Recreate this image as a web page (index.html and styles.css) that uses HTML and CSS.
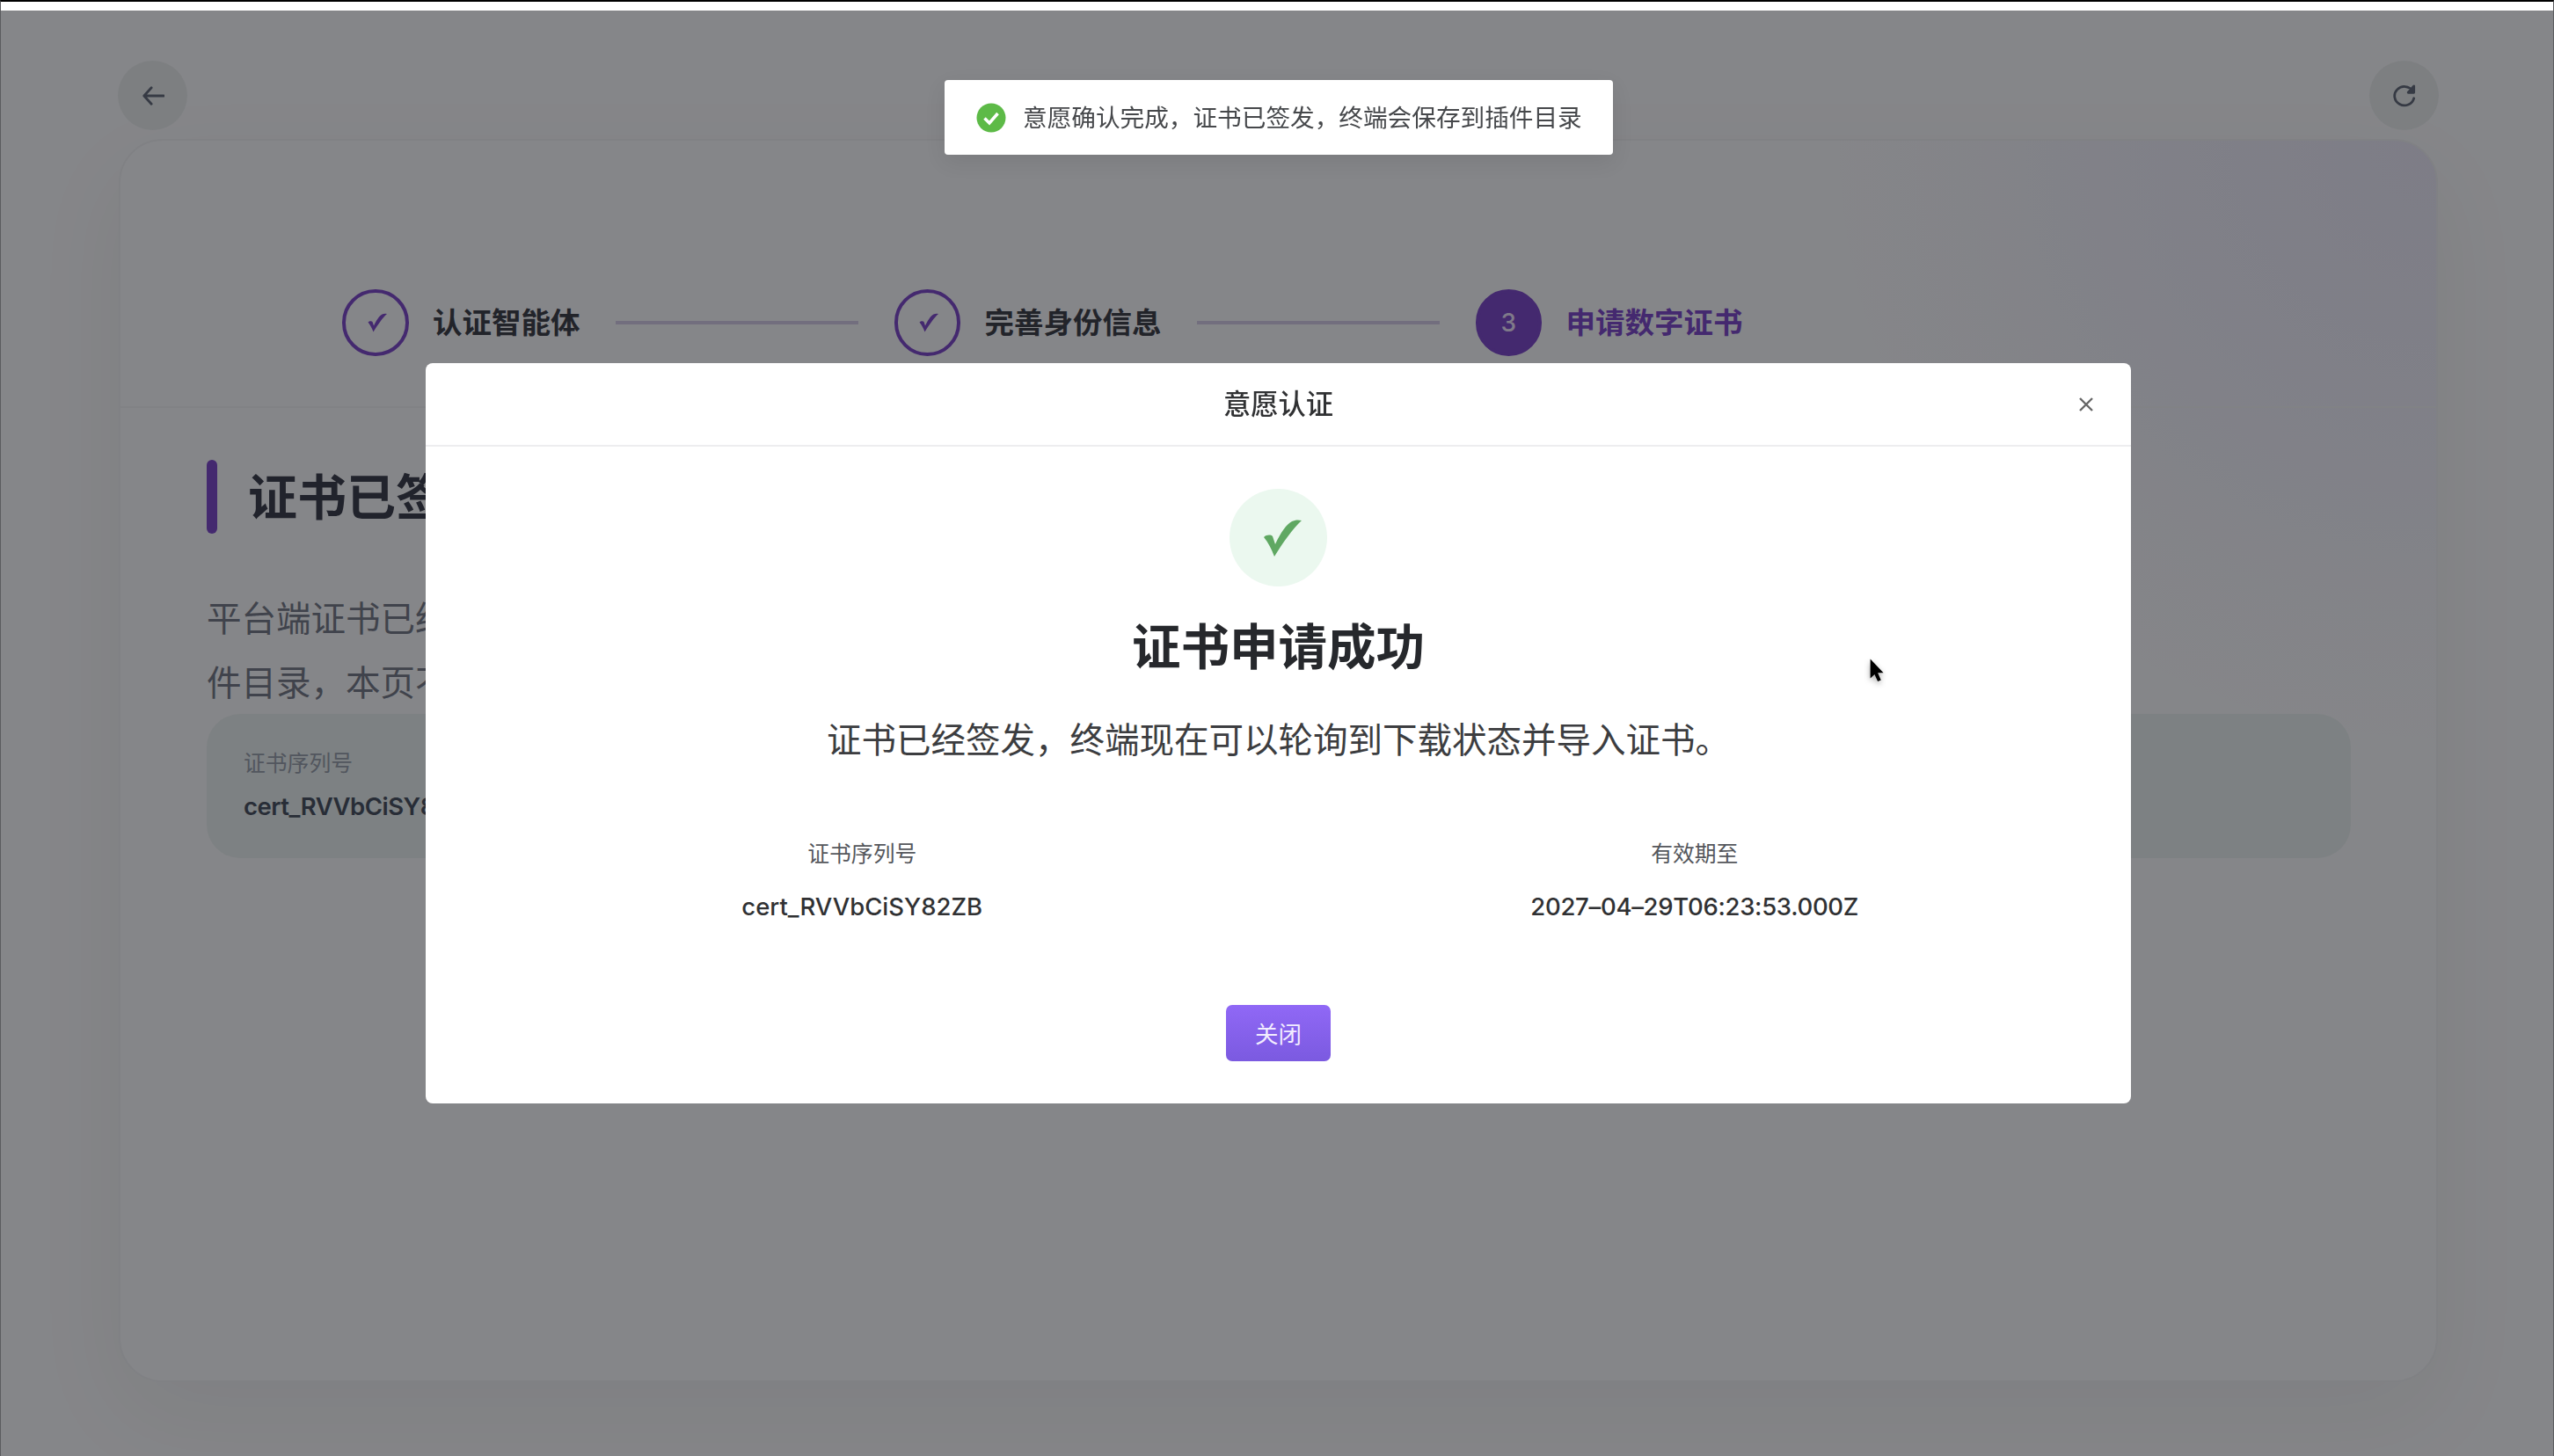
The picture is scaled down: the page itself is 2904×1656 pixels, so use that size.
FILE: index.html
```html
<!DOCTYPE html>
<html lang="zh-CN">
<head>
	<meta charset="UTF-8">
	<title>申请数字证书</title>
	<link rel="stylesheet" href="styles.css">
</head>
<body>
	<div class="page">
		<div class="toolbar">
			<button type="button" class="round-btn">
				<svg width="26" height="26" viewBox="0 0 28 28"><path d="M27 14H3M12 4L3 14l9 10"/></svg>
			</button>
			<button type="button" class="round-btn">
				<svg width="26" height="26" viewBox="0 0 28 28"><path d="M25.500 17A12 11.500 0 1 1 24 8M25.500 2v8h-7z"/></svg>
			</button>
		</div>
		<div class="card">
			<div class="steps">
				<div class="step">
					<span class="step-icon"><svg width="22" height="22" viewBox="0 0 44 42"><path d="M1 20c3-3 8-3 10-1l3 9C20 15 27 5 33 2c3-1.500 7-2 11-1C34 10 23 26 13 42 10 34 6 26 1 20z"/></svg></span>
					<span class="step-label">认证智能体</span>
				</div>
				<div class="step-line"></div>
				<div class="step">
					<span class="step-icon"><svg width="22" height="22" viewBox="0 0 44 42"><path d="M1 20c3-3 8-3 10-1l3 9C20 15 27 5 33 2c3-1.500 7-2 11-1C34 10 23 26 13 42 10 34 6 26 1 20z"/></svg></span>
					<span class="step-label">完善身份信息</span>
				</div>
				<div class="step-line"></div>
				<div class="step active">
					<span class="step-icon">3</span>
					<span class="step-label">申请数字证书</span>
				</div>
			</div>
			<div class="content">
				<h1><span>证书已签发</span></h1>
				<p class="desc">平台端证书已经签发，终端会自动下载并保存到插<br>件目录，本页不提供下载。</p>
				<div class="cert-box">
					<span class="cert-label">证书序列号</span>
					<span class="cert-value">cert_RVVbCiSY82ZB</span>
				</div>
			</div>
		</div>
	</div>

	<div class="mask">
		<div class="modal">
			<div class="modal-header">
				<h2>意愿认证</h2>
				<svg class="modal-close" width="16" height="16" viewBox="0 0 16 16"><path d="M1 1l14 14M15 1L1 15"/></svg>
			</div>
			<div class="modal-body">
				<div class="success">
					<svg width="44" height="42" viewBox="0 0 44 42"><path d="M1 20c3-3 8-3 10-1l3 9C20 15 27 5 33 2c3-1.500 7-2 11-1C34 10 23 26 13 42 10 34 6 26 1 20z"/></svg>
				</div>
				<h3>证书申请成功</h3>
				<p>证书已经签发，终端现在可以轮询到下载状态并导入证书。</p>
				<div class="info">
					<div class="info-item">
						<span class="info-label">证书序列号</span>
						<span class="info-value">cert_RVVbCiSY82ZB</span>
					</div>
					<div class="info-item">
						<span class="info-label">有效期至</span>
						<span class="info-value date">2027–04–29T06:23:53.000Z</span>
					</div>
				</div>
				<button type="button" class="close-btn">关闭</button>
			</div>
		</div>
	</div>

	<div class="toast">
		<svg width="34" height="34" viewBox="0 0 34 34"><circle cx="17" cy="17" r="16.500"/><path d="M9.500 17.500l5.500 5.500L24.500 12"/></svg>
		<span>意愿确认完成，证书已签发，终端会保存到插件目录</span>
	</div>

	<svg class="cursor" width="20" height="36" viewBox="0 0 26 36"><path d="M2 2v27l6-5.500 4.500 10 4.500-2-4.500-10h8z"/></svg>
	<div class="window-edge"></div>
</body>
</html>
```

FILE: styles.css
```css
* {
	box-sizing: border-box;
}
body {
	margin: 0;
	height: 1656px;
	overflow: hidden;
	background-color: #f3f4f9;
	font-family: Inter, "Noto Sans CJK SC", sans-serif;
}
h1, h2, h3, p {
	margin: 0;
}
button {
	padding: 0;
	border: none;
	font-family: inherit;
}
.page {
	padding: 69px 132px 0 135px;
}

/* верхняя панель */
.toolbar {
	display: flex;
	justify-content: space-between;
	margin: 0 -1px;
}
.round-btn {
	display: flex;
	align-items: center;
	justify-content: center;
	width: 79px;
	height: 79px;
	border-radius: 50%;
	background-color: #e3e8ec;
}
.round-btn svg {
	fill: none;
	stroke: #636b7c;
	stroke-width: 3;
	stroke-linecap: round;
	stroke-linejoin: round;
}

/* карточка */
.card {
	height: 1414px;
	margin-top: 10px;
	border: 2px solid #e9ebf1;
	border-radius: 50px;
	background: radial-gradient(circle at 100% 0, rgba(100, 80, 215, 0.1) 0, rgba(100, 90, 215, 0.075) 250px, rgba(90, 90, 215, 0.045) 450px, rgba(90, 90, 215, 0) 690px), #f3f4f9;
	box-shadow: 0 38px 110px rgba(30, 34, 45, 0.055);
}
.steps {
	display: flex;
	align-items: center;
	gap: 40.5px;
	height: 304px;
	padding: 112px 0 0 252px;
	border-bottom: 2px solid #ecedf2;
}
.step {
	display: flex;
	align-items: center;
	gap: 27.5px;
}
.step-icon {
	display: flex;
	align-items: center;
	justify-content: center;
	width: 75.5px;
	height: 75.5px;
	border: 4px solid #7c4bca;
	border-radius: 50%;
	font-size: 28px;
	font-weight: 500;
}
.step-icon svg {
	fill: #7c4bca;
	margin-left: 4px;
}
.step-label {
	font-size: 33.5px;
	line-height: 40px;
	font-weight: 600;
	color: #3f424e;
	white-space: nowrap;
}
.step-line {
	width: 276px;
	height: 4px;
	background-color: #cfc8e5;
}
.active .step-icon {
	background-color: #7c4bca;
	color: #e8dffa;
}
.active .step-label {
	color: #7c4bca;
}
.content {
	padding: 59px 97px 0 98px;
}
h1 {
	display: flex;
	align-items: center;
	gap: 35px;
	height: 84px;
	font-size: 56px;
	font-weight: 600;
	color: #3d4150;
}
h1::before {
	content: "";
	width: 12px;
	height: 84px;
	border-radius: 6px;
	background-color: #7c4bca;
}
h1 span {
	padding-bottom: 8px;
}
.desc {
	margin: 61px 0 -3px;
	font-size: 39.5px;
	line-height: 73.3px;
	color: #757b8a;
}
.cert-box {
	display: flex;
	flex-direction: column;
	height: 164px;
	padding: 36px 42px;
	border-radius: 38px;
	background-color: #e4ebee;
}
.cert-label {
	font-size: 24.8px;
	line-height: 40px;
	color: #959dac;
}
.cert-value {
	margin-top: 8px;
	font-size: 27.5px;
	line-height: 42px;
	font-weight: 600;
	letter-spacing: -0.5px;
	color: #4a5364;
}

/* модальное окно */
.mask {
	position: fixed;
	top: 12px;
	left: 0;
	right: 0;
	bottom: 0;
	display: flex;
	align-items: flex-start;
	justify-content: center;
	padding: 401px 0 0 3px;
	background-color: rgba(0, 0, 0, 0.45);
}
.modal {
	width: 1939px;
	height: 842px;
	border-radius: 8px;
	background-color: #fff;
}
.modal-header {
	display: flex;
	align-items: center;
	justify-content: center;
	height: 95px;
	border-bottom: 2px solid #ededef;
	position: relative;
}
h2 {
	font-size: 31.3px;
	line-height: 40px;
	font-weight: 500;
	color: #303133;
}
.modal-close {
	position: absolute;
	right: 43px;
	top: 39px;
	fill: none;
	stroke: #666;
	stroke-width: 2.4;
}
.modal-body {
	display: flex;
	flex-direction: column;
	align-items: center;
	padding: 48px 37px 0;
}
.success {
	display: flex;
	align-items: center;
	justify-content: center;
	width: 111px;
	height: 111px;
	padding-left: 9px;
	border-radius: 50%;
	background-color: #ebf8ef;
}
.success svg {
	fill: #5fa862;
}
h3 {
	margin-top: 29px;
	font-size: 55.5px;
	line-height: 80px;
	font-weight: 600;
	color: #26282c;
}
.modal-body p {
	margin-top: 36px;
	font-size: 39.5px;
	line-height: 60px;
	color: #3c3d40;
}
.info {
	display: flex;
	gap: 28px;
	width: 100%;
	margin-top: 79px;
}
.info-item {
	flex: 1;
	display: flex;
	flex-direction: column;
	align-items: center;
	gap: 20px;
}
.info-label {
	font-size: 24.8px;
	line-height: 40px;
	color: #55575c;
}
.info-value {
	font-size: 27.5px;
	line-height: 40px;
	font-weight: 500;
	color: #303133;
}
.date {
	letter-spacing: -0.3px;
}
.close-btn {
	width: 119px;
	height: 64px;
	margin-top: 92px;
	padding-bottom: 2px;
	border-radius: 7px;
	background: linear-gradient(#9068f6, #7b5ae0);
	font-size: 26.5px;
	color: #f2edff;
}

/* уведомление */
.toast {
	position: absolute;
	top: 91px;
	left: 1074px;
	display: flex;
	align-items: center;
	gap: 19px;
	width: 760px;
	height: 85px;
	padding-left: 36px;
	border-radius: 4px;
	background-color: #fff;
	box-shadow: 0 8px 24px rgba(0, 0, 0, 0.08);
	font-size: 27.65px;
	color: #46484b;
	white-space: nowrap;
}
.toast span {
	padding-bottom: 3px;
}
.toast circle {
	fill: #5dba47;
}
.toast path {
	fill: none;
	stroke: #fff;
	stroke-width: 3.5;
}
.cursor {
	position: absolute;
	top: 746px;
	left: 2125px;
	width: 21px;
	height: 33px;
	fill: #000;
	filter: drop-shadow(0 3px 3px rgba(0, 0, 0, 0.35));
}

/* рамка окна браузера */
.window-edge {
	position: absolute;
	top: 0;
	left: 0;
	width: 2904px;
	height: 1656px;
	border-top: 2px solid #000;
	border-left: 1px solid #5b5c5f;
	border-right: 1px solid #5b5c5f;
	background: linear-gradient(#fff, #fff) 0 0 / 100% 10px no-repeat;
}
```
